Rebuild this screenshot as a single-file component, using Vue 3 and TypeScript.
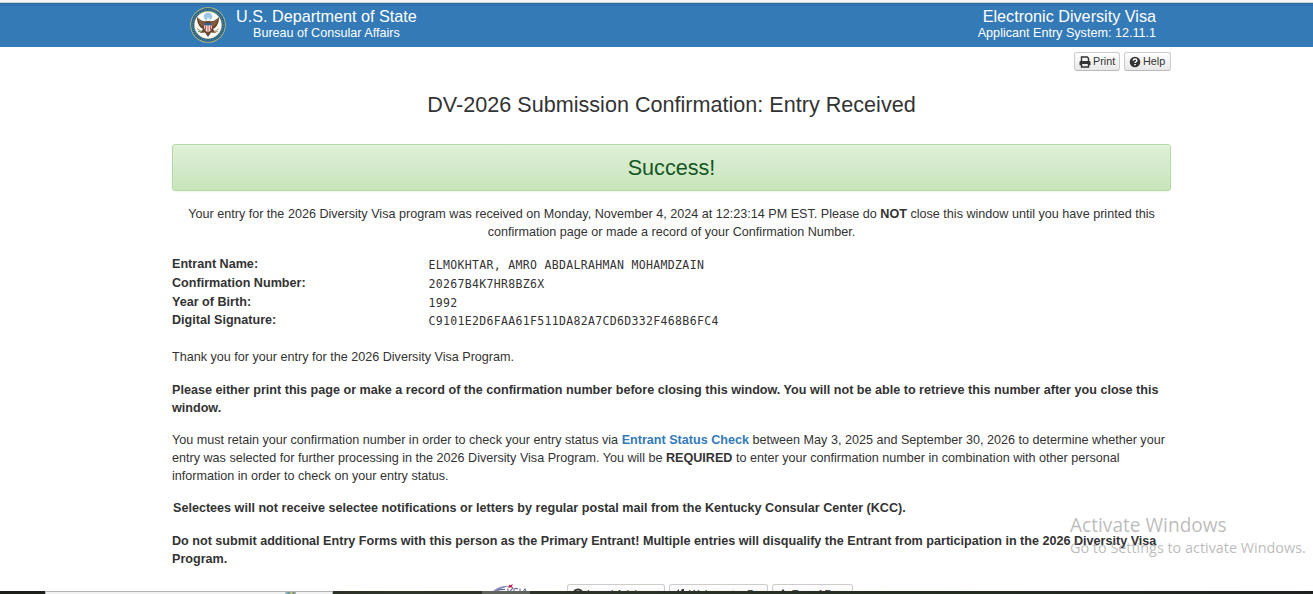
<script setup lang="ts">
interface Field {
  label: string
  value: string
}

const fields: Field[] = [
  { label: 'Entrant Name:', value: 'ELMOKHTAR, AMRO ABDALRAHMAN MOHAMDZAIN' },
  { label: 'Confirmation Number:', value: '20267B4K7HR8BZ6X' },
  { label: 'Year of Birth:', value: '1992' },
  { label: 'Digital Signature:', value: 'C9101E2D6FAA61F511DA82A7CD6D332F468B6FC4' },
]
</script>

<template>
  <div class="screen">
    <header class="banner">
      <div class="brand">
        <svg class="seal" viewBox="0 0 36 36">
          <circle cx="18" cy="18" r="17.8" fill="#b9bd78" />
          <circle cx="18" cy="18" r="16.9" fill="#25618b" />
          <circle cx="18" cy="18" r="15.2" fill="none" stroke="#7fa39a" stroke-width="1" stroke-dasharray="1 1.3" />
          <circle cx="18" cy="18" r="13.9" fill="#c8bf85" />
          <circle cx="18" cy="18" r="13.3" fill="#fafbf8" />
          <circle cx="18" cy="9.6" r="4.2" fill="#9cc7e8" />
          <path d="M16.6 14C13 15 10 13 7 10C7 16 9 20 13 22L10 26L15 25.5L18 30L21 25.5L26 26L23 22C27 20 29 16 29 10C26 13 23 15 19.4 14L18 12Z" fill="#69482e" />
          <path d="M8.5 13L14 16.5M9.5 16L14 18.5M27.5 13L22 16.5M26.5 16L22 18.5" stroke="#a87c50" stroke-width=".8" />
          <path d="M14.2 16H21.8V21Q21 24 18 25.2Q15 24 14.2 21Z" fill="#f5e9e5" />
          <path d="M14.2 16H21.8V18.4H14.2Z" fill="#345788" />
          <path d="M15.6 18.5V23.4M18 18.5V25M20.4 18.5V23.4" stroke="#bd4d4d" stroke-width="1" />
          <path d="M17 11.5L19 11L20 12.5L18.7 14H17Z" fill="#fff" />
          <path d="M7 21.5L12 25M8 24.5L12 25" stroke="#66935a" stroke-width="1" />
          <path d="M24 25L29 21.5M24 25L28 24.5" stroke="#9c9b7c" stroke-width="1" />
        </svg>
        <div class="agency">
          <div class="big">U.S. Department of State</div>
          <div class="small bureau">Bureau of Consular Affairs</div>
        </div>
      </div>
      <div class="system">
        <div class="big">Electronic Diversity Visa</div>
        <div class="small">Applicant Entry System: 12.11.1</div>
      </div>
    </header>

    <main>
      <div class="tools">
        <button class="btn print">
          <svg viewBox="0 0 12 12"><path d="M2.5 5.5V1H8.2L9.5 2.3V5.5M2.5 8V11H9.5V8" fill="none" stroke="#333" stroke-width="1.4" /><path d="M1.8 5H10.2Q11.5 5 11.5 6.3V9.2H9.8V7.9H2.2V9.2H.5V6.3Q.5 5 1.8 5Z" fill="#333" /></svg>
          <span>Print</span>
        </button>
        <button class="btn help">
          <svg viewBox="0 0 12 12"><circle cx="6" cy="6" r="5.3" fill="#333" /><path d="M4.1 4.7Q4.3 3 6 3Q7.9 3 7.9 4.5Q7.9 5.4 6.8 5.9Q6 6.3 6 7" fill="none" stroke="#fff" stroke-width="1.4" /><path d="M5.2 7.9H6.8V9.3H5.2Z" fill="#fff" /></svg>
          <span>Help</span>
        </button>
      </div>
      <h1>DV-2026 Submission Confirmation: Entry Received</h1>
      <div class="alert">Success!</div>
      <p class="lead">
        Your entry for the 2026 Diversity Visa program was received on Monday, November 4, 2024 at 12:23:14 PM EST. Please do <b>NOT</b> close this window until you have printed this<br />
        confirmation page or made a record of your Confirmation Number.
      </p>
      <dl>
        <template v-for="f in fields" :key="f.label">
          <dt>{{ f.label }}</dt>
          <dd>{{ f.value }}</dd>
        </template>
      </dl>
      <p>Thank you for your entry for the 2026 Diversity Visa Program.</p>
      <p class="strong notice">
        Please either print this page or make a record of the confirmation number before closing this window. You will not be able to retrieve this number after you close this<br />
        window.
      </p>
      <p class="retain">
        You must retain your confirmation number in order to check your entry status via <a>Entrant Status Check</a> between May 3, 2025 and September 30, 2026 to determine whether your<br />
        entry was selected for further processing in the 2026 Diversity Visa Program. You will be <b>REQUIRED</b> to enter your confirmation number in combination with other personal<br />
        information in order to check on your entry status.
      </p>
      <p class="strong selectees">Selectees will not receive selectee notifications or letters by regular postal mail from the Kentucky Consular Center (KCC).</p>
      <p class="strong">
        Do not submit additional Entry Forms with this person as the Primary Entrant! Multiple entries will disqualify the Entrant from participation in the 2026 Diversity Visa<br />
        Program.
      </p>
      <footer>
        <svg class="visa-logo" viewBox="0 0 40 10">
          <path d="M2 7Q9 1 20 2Q11 3 6 8" fill="#8d91bd" />
          <path d="M6 6L14 5.4M16.5 4.6L17.5 8M22 4Q19 6 18 10M27 5Q22 3 23 7M29 9V4.5M31 9L34 5L36 9" fill="none" stroke="#656a9c" stroke-width="1.1" />
          <path d="M18 .4L19.6 1.3L22 0L21 2L22 4L19.6 3.2L17 4.2L18 2Z" fill="#c02348" />
        </svg>
        <span class="btn foot f1"><svg viewBox="0 0 12 12"><circle cx="6" cy="6" r="4.5" fill="none" stroke="#333" stroke-width="2" /></svg>Legal Advisory</span>
        <span class="btn foot f2"><svg viewBox="0 0 12 12"><path d="M2 11V4L5 1V6L8 1H10V5L7 11Z" fill="#333" /></svg>Webmaster Page</span>
        <span class="btn foot f3"><svg viewBox="0 0 12 12"><path d="M6 1L10 6H7V11H5V6H2Z" fill="#333" /></svg>Top of Page</span>
      </footer>
    </main>

    <div class="watermark">
      <div class="w1">Activate Windows</div>
      <div class="w2">Go to Settings to activate Windows.</div>
    </div>
    <div class="taskbar">
      <div class="search"><i /></div>
      <div class="active" />
    </div>
  </div>
</template>

<style>
body {
  overflow: hidden;
}
</style>

<style scoped>
.screen {
  position: relative;
  box-sizing: border-box;
  width: 1313px;
  height: 594px;
  overflow: hidden;
  border-top: 2px solid #f7f7f5;
  background: #fff;
  color: #333;
  font: 12.6px/18px "Liberation Sans", Arial, sans-serif;
  white-space: nowrap;
}
.banner {
  display: flex;
  justify-content: space-between;
  box-sizing: border-box;
  height: 45px;
  padding: 4px 157px 0 190px;
  border-top: 1px solid #c9d2d4;
  background: linear-gradient(#2d6da5, #337ab7 4px);
  color: #fff;
}
.brand {
  display: flex;
}
.seal {
  width: 36px;
  height: 36px;
}
.agency {
  margin-left: 10px;
}
.big {
  height: 18px;
  font-size: 16.2px;
  line-height: 18px;
}
.small {
  font-size: 12.6px;
  line-height: 16px;
}
.bureau {
  padding-left: 17px;
}
.system {
  text-align: right;
}
main {
  width: 999px;
  margin-left: 172px;
}
.tools {
  display: flex;
  justify-content: flex-end;
  gap: 4px;
  height: 25px;
  padding-top: 5px;
  box-sizing: border-box;
}
.btn {
  display: flex;
  align-items: center;
  box-sizing: border-box;
  height: 19px;
  padding: 0 4px;
  border: 1px solid #ccc;
  border-bottom-color: #b9b9b9;
  border-radius: 3px;
  background: linear-gradient(#fff, #e8e8e8);
  color: #333;
  font: 10.8px/16px "Liberation Sans", Arial, sans-serif;
}
.btn svg {
  flex: none;
  width: 12px;
  height: 12px;
  margin-right: 2px;
}
.btn span {
  padding-bottom: 1px;
}
.print {
  width: 46px;
}
.help {
  width: 47px;
}
h1 {
  height: 30px;
  margin: 17px 0 25px;
  font-size: 21.6px;
  font-weight: 400;
  line-height: 31px;
  text-align: center;
}
.alert {
  box-sizing: border-box;
  height: 47px;
  margin-bottom: 14px;
  border: 1px solid #b2dba1;
  border-radius: 3px;
  background: linear-gradient(#dff0d8, #c8e5bc);
  box-shadow: 0 1px 2px rgba(0, 0, 0, 0.05), inset 0 1px 0 rgba(255, 255, 255, 0.25);
  color: #155724;
  font-size: 21.6px;
  line-height: 45px;
  text-align: center;
}
p {
  margin: 0 0 15px;
}
.lead {
  margin-bottom: 14px;
  text-align: center;
}
dl {
  display: grid;
  grid-template-columns: 256.5px auto;
  grid-template-rows: 19px 19px 18px 18px;
  height: 93px;
  margin: 0;
}
dt {
  font-weight: 700;
}
dd {
  margin: 0;
  padding-top: 1px;
  font-family: "DejaVu Sans Mono", monospace;
  font-size: 11.5px;
  letter-spacing: 0.33px;
}
.strong,
b,
a {
  font-weight: 700;
}
.notice {
  margin-bottom: 14px;
}
.retain {
  margin-bottom: 14px;
}
.selectees {
  padding-left: 1px;
}
a {
  color: #337ab7;
}
footer {
  display: flex;
  align-items: flex-start;
  height: 25px;
  padding-left: 319px;
  padding-top: 1px;
}
.visa-logo {
  width: 40px;
  height: 10px;
  margin-right: 36px;
}
.foot {
  height: 19px;
  margin-right: 4px;
}
.foot svg {
  margin-right: 3px;
}
.f1 {
  width: 98px;
}
.f2 {
  width: 99px;
}
.f3 {
  width: 81px;
}
.watermark {
  position: absolute;
  left: 1070px;
  top: 511px;
  color: rgba(120, 120, 120, 0.5);
  font-family: "Open Sans", "Noto Sans", sans-serif;
}
.w1 {
  height: 24px;
  font-size: 19.1px;
  line-height: 24px;
}
.w2 {
  font-size: 14.4px;
  line-height: 21px;
}
.taskbar {
  position: absolute;
  left: 0;
  right: 0;
  bottom: 0;
  display: flex;
  height: 3px;
  background: linear-gradient(90deg, #1c1f19, #30352a 30%, #252e22 70%, #1e2120);
}
.search {
  box-sizing: border-box;
  width: 288px;
  height: 3px;
  margin-left: 45px;
  padding: 0 0 0 239px;
  border: 1px solid #b5b5b5;
  border-bottom: 0;
  background: #f2f2f2;
}
.search i {
  display: block;
  width: 11px;
  height: 2px;
  background: linear-gradient(90deg, #c4c9c4, #5692b4 35%, #e2cd55 60%, #61879a 75%, #c0b9a4);
}
.active {
  width: 48px;
  margin-left: 149px;
  background: #5e625a;
}
</style>
